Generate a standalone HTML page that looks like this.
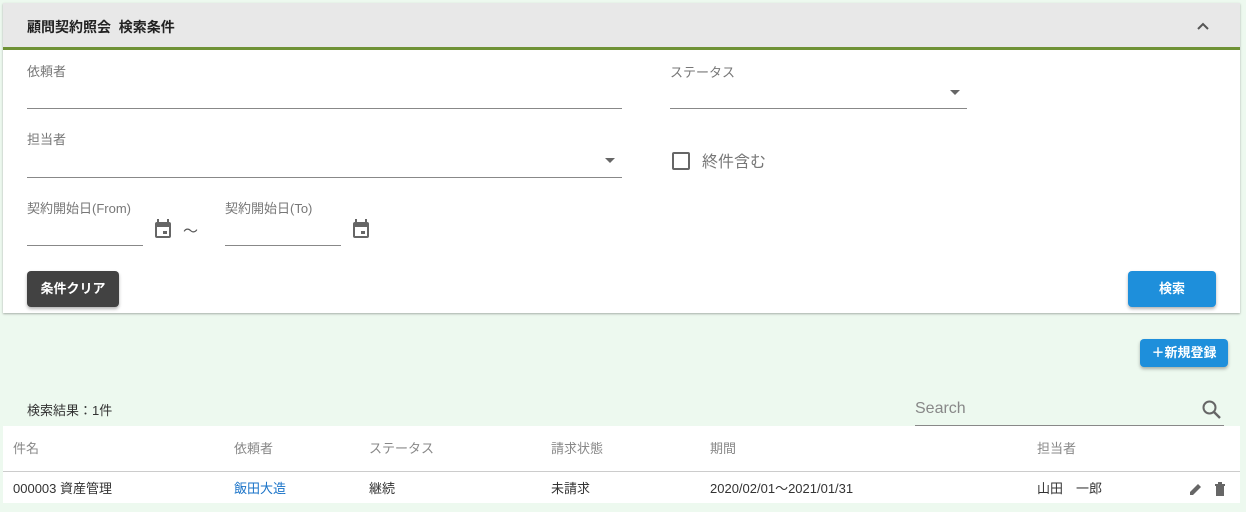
<!DOCTYPE html>
<html><head><meta charset="utf-8"><style>
*{box-sizing:border-box;margin:0;padding:0}
body{width:1246px;height:512px;background:#edf9ef;font-family:"Liberation Sans","Noto Sans CJK JP",sans-serif;position:relative;overflow:hidden;color:#333}
.a{position:absolute}
.card{left:3px;top:3px;width:1237px;height:310px;background:#fff;box-shadow:0 1px 2px rgba(0,0,0,.3)}
.hdr{left:0;top:0;width:1237px;height:47px;background:#e8e8e8;border-bottom:3px solid #6f9236}
.lbl{font-size:13px;color:#777}
.line{height:1px;background:#888}
.btn{border-radius:4px;color:#fff;font-size:13px;font-weight:bold;text-align:center;box-shadow:0 2px 3px rgba(0,0,0,.3)}
.th{font-size:13px;color:#888;top:438px}
.td{font-size:13px;color:#333;top:478px}
</style></head><body>
<div class="a card">
 <div class="a hdr"><div class="a" style="left:24px;top:14px;font-size:14px;font-weight:bold;color:#222">顧問契約照会&nbsp;&nbsp;検索条件</div>
 <svg class="a" style="left:1192px;top:17px" width="16" height="12" viewBox="0 0 16 12"><path d="M3 9l5-5 5 5" fill="none" stroke="#555" stroke-width="2"/></svg></div>
</div>
<div class="a lbl" style="left:27px;top:61px">依頼者</div>
<div class="a line" style="left:27px;top:108px;width:595px"></div>
<div class="a lbl" style="left:670px;top:62px">ステータス</div>
<div class="a line" style="left:670px;top:108px;width:297px"></div>
<svg class="a" style="left:949px;top:89px" width="12" height="8"><path d="M1 1h10L6 6z" fill="#666"/></svg>
<div class="a lbl" style="left:27px;top:129px">担当者</div>
<div class="a line" style="left:27px;top:177px;width:595px"></div>
<svg class="a" style="left:604px;top:157px" width="12" height="8"><path d="M1 1h10L6 6z" fill="#666"/></svg>
<div class="a" style="left:672px;top:152px;width:18px;height:18px;border:2px solid #666;border-radius:2px"></div>
<div class="a" style="left:702px;top:148px;font-size:16px;color:#777">終件含む</div>
<div class="a lbl" style="left:27px;top:198px">契約開始日(From)</div>
<div class="a line" style="left:27px;top:245px;width:116px"></div>
<svg class="a" style="left:153px;top:218px" width="20" height="22" viewBox="0 0 20 22"><path d="M5 1v3M15 1v3" stroke="#666" stroke-width="2"/><rect x="2" y="4" width="16" height="16" rx="2" fill="#666"/><rect x="4" y="9" width="12" height="9" fill="#fff"/><rect x="10" y="13" width="4" height="3" fill="#666"/></svg>
<div class="a" style="left:183px;top:220px;font-size:15px;color:#555">～</div>
<div class="a lbl" style="left:225px;top:198px">契約開始日(To)</div>
<div class="a line" style="left:225px;top:245px;width:116px"></div>
<svg class="a" style="left:351px;top:218px" width="20" height="22" viewBox="0 0 20 22"><path d="M5 1v3M15 1v3" stroke="#666" stroke-width="2"/><rect x="2" y="4" width="16" height="16" rx="2" fill="#666"/><rect x="4" y="9" width="12" height="9" fill="#fff"/><rect x="10" y="13" width="4" height="3" fill="#666"/></svg>
<div class="a btn" style="left:27px;top:271px;width:92px;height:36px;line-height:36px;background:#424242">条件クリア</div>
<div class="a btn" style="left:1128px;top:271px;width:88px;height:36px;line-height:36px;background:#1e8fdb">検索</div>
<div class="a btn" style="left:1140px;top:339px;width:88px;height:28px;line-height:28px;background:#1e8fdb">＋新規登録</div>
<div class="a" style="left:27px;top:400px;font-size:13px;color:#333">検索結果：1件</div>
<div class="a" style="left:915px;top:400px;font-size:16px;color:#888">Search</div>
<svg class="a" style="left:1201px;top:399px" width="22" height="22" viewBox="0 0 22 22"><circle cx="8.5" cy="8.5" r="6" fill="none" stroke="#666" stroke-width="2"/><path d="M13 13l6 6" stroke="#666" stroke-width="2.4"/></svg>
<div class="a line" style="left:915px;top:425px;width:309px"></div>
<div class="a" style="left:3px;top:426px;width:1237px;height:77px;background:#fff"></div>
<div class="a" style="left:3px;top:471px;width:1237px;height:1px;background:#ccc"></div>
<div class="a th" style="left:13px">件名</div>
<div class="a th" style="left:234px">依頼者</div>
<div class="a th" style="left:369px">ステータス</div>
<div class="a th" style="left:551px">請求状態</div>
<div class="a th" style="left:710px">期間</div>
<div class="a th" style="left:1037px">担当者</div>
<div class="a td" style="left:13px">000003 資産管理</div>
<div class="a td" style="left:234px;color:#1a73c8">飯田大造</div>
<div class="a td" style="left:369px">継続</div>
<div class="a td" style="left:551px">未請求</div>
<div class="a td" style="left:710px">2020/02/01～2021/01/31</div>
<div class="a td" style="left:1037px">山田　一郎</div>
<svg class="a" style="left:1189px;top:482px" width="14" height="14" viewBox="0 0 14 14"><path d="M1 13v-3l8-8 3 3-8 8z" fill="#666"/></svg>
<svg class="a" style="left:1214px;top:482px" width="12" height="14" viewBox="0 0 12 14"><rect x="1" y="2" width="10" height="2" fill="#666"/><rect x="4" y="0" width="4" height="2" fill="#666"/><rect x="2" y="4" width="8" height="10" fill="#666"/></svg>
</body></html>
